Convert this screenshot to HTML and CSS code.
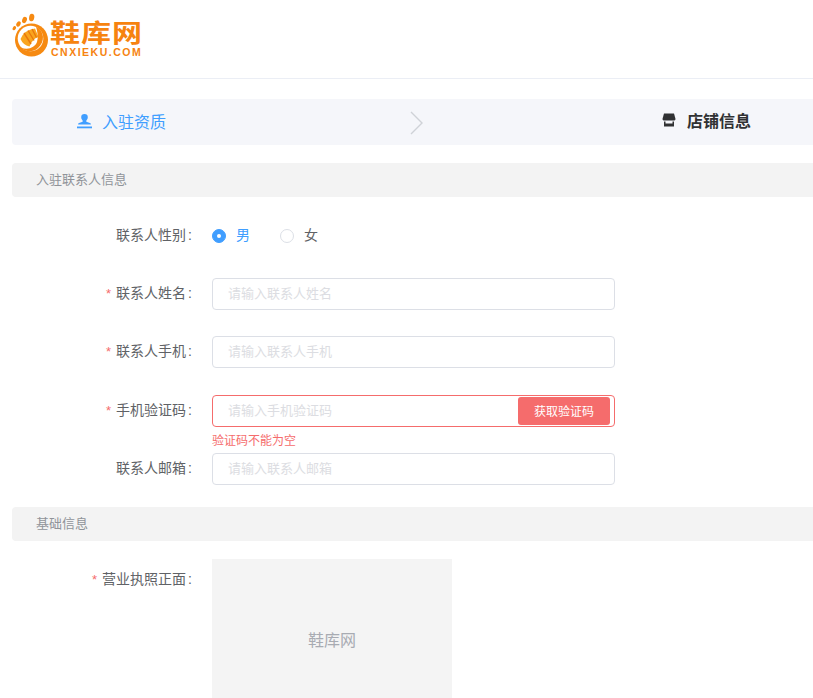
FILE: index.html
```html
<!DOCTYPE html>
<html lang="zh-CN">
<head>
<meta charset="utf-8">
<title>鞋库网</title>
<link rel="stylesheet" href="styles.css">
</head>
<body>
<header class="header">
  <div class="logo">
    <svg class="logo-mark" width="38" height="46" viewBox="12 12 38 46">
      <circle cx="31.500" cy="40" r="16.500" fill="#f68a12"/>
      <circle cx="30.500" cy="38.500" r="12.800" fill="#fff"/>
      <path d="M20.500 39 Q24 30 35 28.500 L38.500 37 Q33 38 29.500 46.500 Q23 45 20.500 39Z" fill="#f9a51f"/>
      <path d="M24 33 L31 44 M28 30.500 L34 40.500 M32 29 L36.500 37.500" stroke="#e9780c" stroke-width="1.400" fill="none"/>
      <path d="M36 26.500 C45 31 45 42 38 48 C33 52.500 26 52.500 21 47.500 C28 50.500 35 47.500 37 42 C38.500 37 37.500 32 36 26.500Z" fill="#f68a12"/>
      <ellipse cx="14.300" cy="28.200" rx="1.500" ry="2.200" transform="rotate(30 14.300 28.200)" fill="#f68a12"/>
      <ellipse cx="18.500" cy="24" rx="2" ry="2.800" transform="rotate(30 18.500 24)" fill="#f68a12"/>
      <ellipse cx="24.500" cy="20" rx="2.300" ry="3.300" transform="rotate(20 24.500 20)" fill="#f68a12"/>
      <ellipse cx="31.700" cy="17.500" rx="2.600" ry="3.800" transform="rotate(8 31.700 17.500)" fill="#f68a12"/>
    </svg>
    <div class="logo-text">
      <div class="logo-cn">鞋库网</div>
      <div class="logo-en">CNXIEKU.COM</div>
    </div>
  </div>
</header>

<main class="content">
  <nav class="steps">
    <div class="step step-done">
      <svg class="step-icon" width="15" height="15" viewBox="0 0 15 15"><path d="M7.500 0a3.300 3.300 0 0 1 3.300 3.300c0 1.700-1 2.600-1.500 3.500-.3.600 0 1.100.8 1.300l2.800.8c.8.200 1 .8 1 1.600H1.100c0-.8.200-1.400 1-1.600l2.800-.8c.8-.2 1.100-.7.800-1.300C5.200 5.900 4.200 5 4.200 3.300A3.300 3.300 0 0 1 7.500 0z" fill="#409eff"/><rect x="0" y="12.500" width="15" height="1.800" fill="#409eff"/></svg>
      <span>入驻资质</span>
    </div>
    <svg class="step-arrow" width="14" height="24" viewBox="0 0 14 24"><path d="M1 1 L12 12 L1 23" fill="none" stroke="#cfd2d7" stroke-width="1.400"/></svg>
    <div class="step step-current">
      <svg class="step-icon" width="14" height="14" viewBox="0 0 14 14"><path d="M2 .500h10l1.500 5.500c0 1-1 1.500-2 1.500H2.500c-1 0-2-.5-2-1.500z" fill="#303133"/><path d="M2 8.500h1.500v2h7v-2H12v5H2z" fill="#303133"/></svg>
      <span>店铺信息</span>
    </div>
  </nav>

  <div class="section-title">入驻联系人信息</div>

  <form class="form">
    <div class="row row-gender">
      <div class="label">联系人性别<i class="colon">:</i></div>
      <div class="radios">
        <span class="radio radio-on"><i class="dot"></i><em class="radio-text">男</em></span>
        <span class="radio"><i class="dot"></i><em class="radio-text">女</em></span>
      </div>
    </div>
    <div class="row row-name">
      <div class="label"><b>*</b>联系人姓名<i class="colon">:</i></div>
      <div class="field"><input class="input" placeholder="请输入联系人姓名"></div>
    </div>
    <div class="row row-phone">
      <div class="label"><b>*</b>联系人手机<i class="colon">:</i></div>
      <div class="field"><input class="input" placeholder="请输入联系人手机"></div>
    </div>
    <div class="row row-code">
      <div class="label"><b>*</b>手机验证码<i class="colon">:</i></div>
      <div class="field">
        <div class="code-box">
          <input class="input input-code" placeholder="请输入手机验证码">
          <button class="code-btn" type="button">获取验证码</button>
        </div>
        <div class="error">验证码不能为空</div>
      </div>
    </div>
    <div class="row row-mail">
      <div class="label">联系人邮箱<i class="colon">:</i></div>
      <div class="field"><input class="input" placeholder="请输入联系人邮箱"></div>
    </div>
  </form>

  <div class="section-title section-base">基础信息</div>

  <div class="row row-upload">
    <div class="label"><b>*</b>营业执照正面<i class="colon">:</i></div>
    <div class="upload">鞋库网</div>
  </div>
</main>
</body>
</html>
```
FILE: styles.css
```css
* { box-sizing: border-box; }
html, body { margin: 0; height: 698px; overflow: hidden; background: #fff; }
body { font-family: "Liberation Sans", "Noto Sans CJK SC", sans-serif; font-size: 13px; color: #606266; }

.header { height: 79px; border-bottom: 1px solid #ebeef5; padding: 12px 0 0 12px; }
.logo { display: flex; align-items: flex-start; }
.logo-mark { display: block; }
.logo-text { margin: 9px 0 0 0; }
.logo-cn { font-size: 30px; line-height: 26px; height: 25px; font-weight: 700; color: #f6830f; letter-spacing: 1px; font-family: "Noto Sans CJK SC", sans-serif; white-space: nowrap; transform: scaleY(.82); transform-origin: top left; }
.logo-en { font-size: 10.500px; line-height: 12px; font-weight: 700; color: #f6830f; letter-spacing: 1.500px; padding-left: 1px; }

.content { padding: 20px 0 0 12px; }

.steps { display: flex; align-items: center; height: 46px; background: #f5f6fa; border-radius: 4px 0 0 4px; padding-left: 65px; }
.step { display: flex; align-items: center; font-size: 16px; }
.step-icon { margin-right: 10px; }
.step-done { color: #409eff; width: 333px; margin-top: -2px; }
.step-arrow { margin-top: 1px; }
.step-current { color: #303133; font-weight: 700; margin-left: 238px; margin-top: -4px; }
.step-current .step-icon { margin-right: 11px; }

.section-title { height: 34px; line-height: 34px; margin-top: 18px; padding-left: 24px; background: #f3f3f3; border-radius: 4px 0 0 4px; color: #909399; font-size: 13px; }
.section-base { margin-top: 22px; }

.form { display: block; }
.row { display: flex; align-items: flex-start; }
.label { width: 200px; height: 32px; padding-right: 20px; text-align: right; font-size: 14px; line-height: 30px; color: #606266; white-space: nowrap; }
.label b { font-weight: 400; font-size: 13px; color: #f56c6c; margin-right: 5px; }
.colon { font-style: normal; margin-left: 2px; }
.field { width: 403px; }

.row-gender { margin-top: 23px; height: 32px; }
.row-name { margin-top: 26px; }
.row-phone { margin-top: 26px; }
.row-code { margin-top: 27px; height: 32px; }
.row-mail { margin-top: 26px; }
.row-upload { margin-top: 18px; }
.row-upload .label { height: 40px; line-height: 40px; }

.radios { display: flex; height: 32px; }
.radio { display: flex; align-items: center; width: 68px; color: #606266; font-size: 14px; }
.radio-text { font-style: normal; line-height: 30px; height: 32px; }
.dot { width: 14px; height: 14px; border-radius: 50%; border: 1px solid #dcdfe6; background: #fff; margin-right: 10px; display: block; }
.radio-on { color: #409eff; }
.radio-on .dot { background: #409eff; border-color: #409eff; position: relative; }
.radio-on .dot::after { content: ""; position: absolute; left: 4px; top: 4px; width: 4px; height: 4px; border-radius: 50%; background: #fff; }

.input { display: block; width: 100%; height: 32px; border: 1px solid #dcdfe6; border-radius: 4px; padding: 0 15px 2px; font: inherit; color: #606266; background: #fff; outline: none; }
.input::placeholder { color: #dcdde2; opacity: 1; }

.code-box { display: flex; align-items: center; height: 32px; border: 1px solid #f56c6c; border-radius: 4px; padding-right: 4px; }
.input-code { flex: 1; min-width: 0; height: 30px; border: 0; background: transparent; }
.code-btn { width: 92px; height: 28px; border: 0; border-radius: 3px; background: #f56c6c; color: #fff; font: inherit; font-size: 12px; padding: 0 0 2px; }
.error { color: #f56c6c; font-size: 12px; line-height: 14px; margin-top: 7px; white-space: nowrap; }

.upload { width: 240px; height: 240px; background: #f4f4f4; color: #a8abb2; font-size: 16px; display: flex; align-items: center; justify-content: center; padding-bottom: 80px; }
```
